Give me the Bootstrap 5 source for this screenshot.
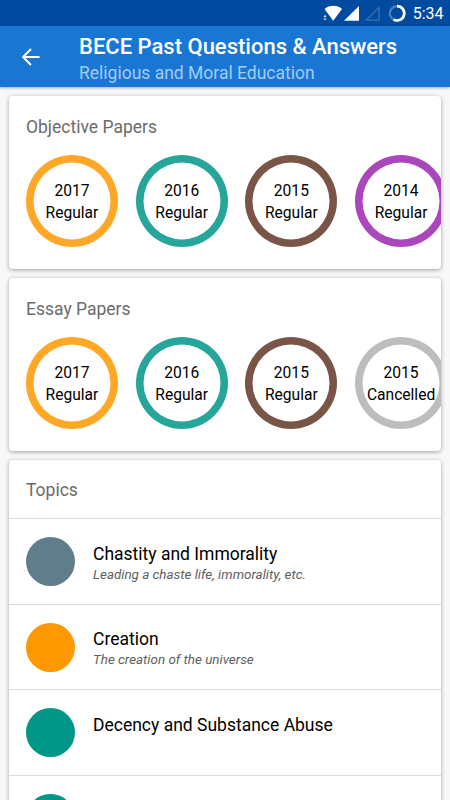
<!DOCTYPE html>
<html lang="en">
<head>
<meta charset="utf-8">
<meta name="viewport" content="width=device-width, initial-scale=1">
<title>BECE Past Questions &amp; Answers</title>
<link href="https://cdn.jsdelivr.net/npm/bootstrap@5.3.0/dist/css/bootstrap.min.css" rel="stylesheet">
<style>
html, body { height: 100%; }
body { font-family: Roboto, sans-serif; background: #f8f8f8; color: #000; }
.screen { height: 100vh; }
.status-bar { height: 26px; background: #004a9f; padding-right: 6.5px; font-size: 16px; line-height: 26px; }
.clock { padding-top: 2px; }
.app-bar { height: 61px; background: #1976d2; padding: 9px 0 0 20px; box-shadow: 0 1px 3px rgba(0,0,0,.3); }
.back-icon { margin-top: 12px; margin-right: 37px; }
.app-title { font-size: 22px; line-height: 24px; font-weight: 500; white-space: nowrap; }
.app-subtitle { font-size: 17.5px; line-height: 26px; margin-top: 1px; color: #a3cbf2; }
.panels { padding: 9px 9px 0; gap: 9px; }
.panel { border-radius: 4px; box-shadow: 0 1px 4px rgba(0,0,0,.36); }
.panel-papers { height: 173px; }
.panel-title { font-size: 17.5px; line-height: 20px; color: #6b6b6b; padding: 21px 17px 0; }
.paper-strip { padding: 18px 0 0 17px; gap: 17.7px; }
.paper { width: 92px; height: 92px; padding-top: 3.500px; font-size: 15.6px; line-height: 21.500px; }
.ring-amber { box-shadow: inset 0 0 0 7.500px #ffa726; }
.ring-teal { box-shadow: inset 0 0 0 7.500px #26a69a; }
.ring-brown { box-shadow: inset 0 0 0 7.500px #795548; }
.ring-purple { box-shadow: inset 0 0 0 7.500px #ab47bc; }
.ring-grey { box-shadow: inset 0 0 0 7.500px #bdbdbd; }
.topics-title { height: 58px; padding-top: 20px; }
.topic { height: 85.5px; border-top: 1px solid #dcdcdc; padding: 18px 17px 0; gap: 18px; }
.dot { width: 49px; height: 49px; }
.dot-slate { background: #607d8b; }
.dot-orange { background: #ff9800; }
.dot-teal { background: #009688; }
.topic-name { font-size: 17.5px; line-height: 22px; padding-top: 5.500px; }
.topic-note { font-size: 13.4px; line-height: 18px; padding-top: 1px; color: #606060; }
</style>
</head>
<body>
<div class="screen d-flex flex-column overflow-hidden">
  <div class="status-bar d-flex justify-content-end align-items-center text-white flex-shrink-0">
    <svg width="86" height="26" viewBox="0 0 86 26" class="me-1">
      <path d="M1.500 9C6.500 4.800 14.500 4.800 19 9L10.200 20.700Z" fill="#fff"/>
      <path d="M0 17.200L2 14.600L4 17.200Z M0 18.200L2 20.800L4 18.200Z" fill="#fff" stroke="#004a9f" stroke-width=".6"/>
      <path d="M36 6V20.800H21Z" fill="#fff"/>
      <path d="M56 7.500V20.100H43.200Z" fill="none" stroke="#3b70b4" stroke-width="1.300"/>
      <circle cx="74" cy="13.300" r="7.200" fill="none" stroke="#4d80bb" stroke-width="2.300"/>
      <path d="M74 6.100A7.200 7.200 0 1 1 70.600 19.600" fill="none" stroke="#fff" stroke-width="2.600"/>
    </svg>
    <span class="clock">5:34</span>
  </div>
  <header class="app-bar d-flex align-items-start text-white flex-shrink-0 position-relative">
    <svg class="back-icon flex-shrink-0" width="22" height="20" viewBox="0 0 22 20">
      <path d="M19.500 10H3.300M11 2L3 10L11 18" fill="none" stroke="#fff" stroke-width="1.900"/>
    </svg>
    <div>
      <div class="app-title">BECE Past Questions &amp; Answers</div>
      <div class="app-subtitle">Religious and Moral Education</div>
    </div>
  </header>
  <main class="panels d-flex flex-column flex-grow-1">
    <section class="panel panel-papers bg-white overflow-hidden flex-shrink-0">
      <div class="panel-title">Objective Papers</div>
      <div class="paper-strip d-flex">
        <div class="paper ring-amber rounded-circle d-flex flex-column justify-content-center align-items-center flex-shrink-0"><span>2017</span><span>Regular</span></div>
        <div class="paper ring-teal rounded-circle d-flex flex-column justify-content-center align-items-center flex-shrink-0"><span>2016</span><span>Regular</span></div>
        <div class="paper ring-brown rounded-circle d-flex flex-column justify-content-center align-items-center flex-shrink-0"><span>2015</span><span>Regular</span></div>
        <div class="paper ring-purple rounded-circle d-flex flex-column justify-content-center align-items-center flex-shrink-0"><span>2014</span><span>Regular</span></div>
      </div>
    </section>
    <section class="panel panel-papers bg-white overflow-hidden flex-shrink-0">
      <div class="panel-title">Essay Papers</div>
      <div class="paper-strip d-flex">
        <div class="paper ring-amber rounded-circle d-flex flex-column justify-content-center align-items-center flex-shrink-0"><span>2017</span><span>Regular</span></div>
        <div class="paper ring-teal rounded-circle d-flex flex-column justify-content-center align-items-center flex-shrink-0"><span>2016</span><span>Regular</span></div>
        <div class="paper ring-brown rounded-circle d-flex flex-column justify-content-center align-items-center flex-shrink-0"><span>2015</span><span>Regular</span></div>
        <div class="paper ring-grey rounded-circle d-flex flex-column justify-content-center align-items-center flex-shrink-0"><span>2015</span><span>Cancelled</span></div>
      </div>
    </section>
    <section class="panel bg-white flex-shrink-0">
      <div class="panel-title topics-title">Topics</div>
      <div class="topic d-flex">
        <div class="dot dot-slate rounded-circle flex-shrink-0"></div>
        <div><div class="topic-name">Chastity and Immorality</div><div class="topic-note fst-italic">Leading a chaste life, immorality, etc.</div></div>
      </div>
      <div class="topic d-flex">
        <div class="dot dot-orange rounded-circle flex-shrink-0"></div>
        <div><div class="topic-name">Creation</div><div class="topic-note fst-italic">The creation of the universe</div></div>
      </div>
      <div class="topic d-flex">
        <div class="dot dot-teal rounded-circle flex-shrink-0"></div>
        <div><div class="topic-name">Decency and Substance Abuse</div></div>
      </div>
      <div class="topic d-flex">
        <div class="dot dot-teal rounded-circle flex-shrink-0"></div>
      </div>
    </section>
  </main>
</div>
<script src="https://cdn.jsdelivr.net/npm/bootstrap@5.3.0/dist/js/bootstrap.bundle.min.js"></script>
</body>
</html>
